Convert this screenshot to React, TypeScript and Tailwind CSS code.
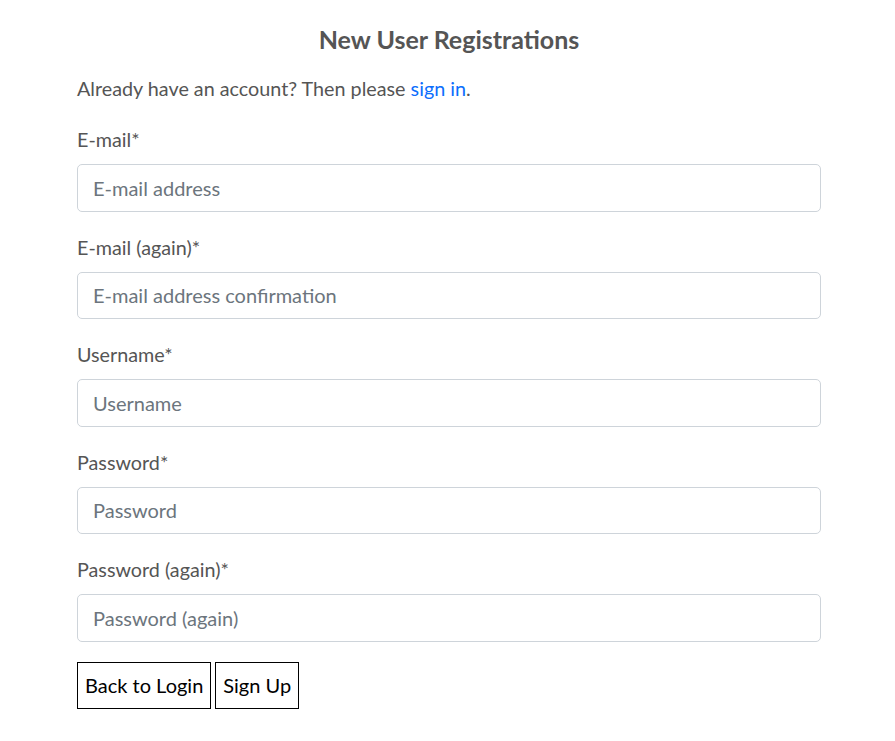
import React from 'react';

const fields = [
  { label: 'E-mail*', placeholder: 'E-mail address', type: 'email' },
  { label: 'E-mail (again)*', placeholder: 'E-mail address confirmation', type: 'email' },
  { label: 'Username*', placeholder: 'Username', type: 'text' },
  { label: 'Password*', placeholder: 'Password', type: 'password' },
  { label: 'Password (again)*', placeholder: 'Password (again)', type: 'password' },
];

export default function App() {
  return (
    <div className="min-h-[741px] bg-white text-[#555] font-['Lato','Open_Sans',sans-serif]">
      <div className="ml-[77px] w-[744px] pt-[23px]">
        <h1 className="text-center text-[25px] font-bold leading-[32px] text-[#555]">New User Registrations</h1>
        <p className="mt-[20px] text-[19.75px] leading-[28px]">
          Already have an account? Then please <a href="#" className="text-[#0d6efd]">sign in</a>.
        </p>
        <form className="mt-[23px]" onSubmit={(e) => e.preventDefault()}>
          {fields.map((f) => (
            <div key={f.label} className="mb-[22px]">
              <label className="block text-[19.75px] leading-[28px] mb-[10px]">{f.label}</label>
              <input
                type={f.type}
                placeholder={f.placeholder}
                className="block w-full h-[47.5px] rounded-[5px] border border-[#ced4da] px-[15px] text-[20px] text-[#555] placeholder:text-[#6c757d] outline-none"
              />
            </div>
          ))}
          <div className="-mt-[2px] flex gap-[4px]">
            <button type="button" className="h-[47px] border border-black px-[7px] text-[20px] text-black">Back to Login</button>
            <button type="submit" className="h-[47px] border border-black px-[7px] text-[20px] text-black">Sign Up</button>
          </div>
        </form>
      </div>
    </div>
  );
}
